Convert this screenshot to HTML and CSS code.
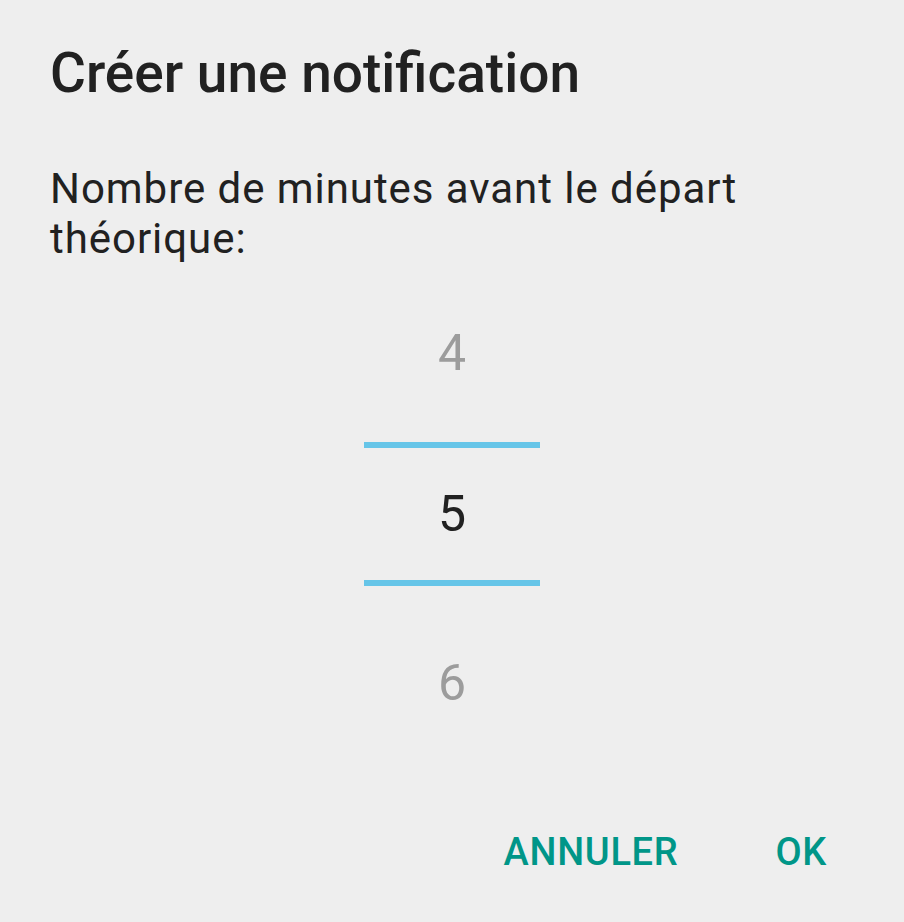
FILE: index.html
```html
<!DOCTYPE html>
<html lang="fr">
<head>
<meta charset="utf-8">
<title>Créer une notification</title>
<link rel="stylesheet" href="styles.css">
</head>
<body>
<div class="dialog">
  <h1 class="title">Créer une notification</h1>
  <p class="message">Nombre de minutes avant le départ théorique:</p>
  <div class="picker">
    <div class="item item-prev">4</div>
    <div class="item item-current">5</div>
    <div class="item item-next">6</div>
  </div>
  <div class="actions">
    <span class="btn">ANNULER</span>
    <span class="btn">OK</span>
  </div>
</div>
</body>
</html>
```
FILE: styles.css
```css
html, body {
  margin: 0;
  padding: 0;
  background: #eeeeee;
}
body {
  font-family: Roboto, "Liberation Sans", sans-serif;
  color: #212121;
  width: 904px;
  height: 922px;
  overflow: hidden;
}
.dialog {
  padding: 0 50px;
  display: flex;
  flex-direction: column;
}
.title {
  margin: 41px 0 0;
  font-size: 55px;
  line-height: 64px;
  font-weight: 500;
  letter-spacing: 0;
  color: #212121;
}
.message {
  margin: 59px 0 0;
  font-size: 42px;
  line-height: 50px;
  font-weight: 400;
  letter-spacing: 0.95px;
  color: #212121;
  width: 760px;
}
.picker {
  align-self: center;
  width: 176px;
  display: flex;
  flex-direction: column;
  text-align: center;
  font-size: 50px;
}
.item-prev {
  height: 178px;
  line-height: 178px;
  color: #9c9c9c;
}
.item-current {
  height: 132px;
  line-height: 132px;
  border-top: 6px solid #66c5e8;
  border-bottom: 6px solid #66c5e8;
  color: #212121;
}
.item-next {
  height: 194px;
  line-height: 194px;
  color: #9c9c9c;
}
.actions {
  margin-top: 47px;
  display: flex;
  justify-content: flex-end;
  gap: 97px;
  padding-right: 27px;
}
.btn {
  font-size: 38px;
  line-height: 50px;
  font-weight: 500;
  letter-spacing: 0.7px;
  color: #009688;
}
```
